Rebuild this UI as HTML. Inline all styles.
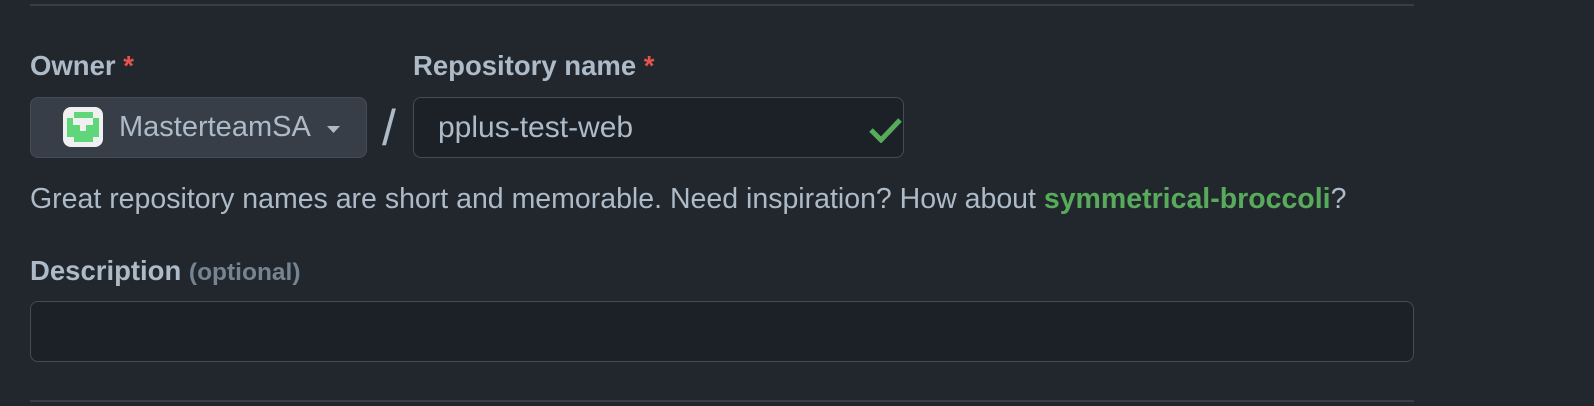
<!DOCTYPE html>
<html><head><meta charset="utf-8"><style>
body{margin:0;width:1594px;height:406px;background:#22272e;position:relative;overflow:hidden;font-family:"Liberation Sans",Arial,sans-serif;color:#adbac7}
.a{position:absolute;white-space:nowrap}
.line{position:absolute;left:30px;width:1384px;height:2px;background:#373e47}
.lbl{font-weight:bold;font-size:27.5px}
.star{color:#e5534b}
</style></head><body>
<div class="line" style="top:4px"></div>
<div class="a lbl" style="left:30px;top:50px">Owner <span class="star">*</span></div>
<div class="a lbl" style="left:413px;top:50px">Repository name <span class="star">*</span></div>
<div class="a" style="left:30px;top:97px;width:335px;height:59px;background:#373e47;border:1px solid #444c56;border-radius:8px"></div>
<svg class="a" style="left:63px;top:107px" width="40" height="40" viewBox="0 0 40 40">
<rect width="40" height="40" rx="8" fill="#f0f0f0"/>
<g fill="#5fd67a">
<rect x="11" y="5" width="19" height="6"/>
<rect x="4" y="11" width="6" height="7"/><rect x="30" y="11" width="6" height="7"/>
<rect x="4" y="18" width="13" height="6"/><rect x="23" y="18" width="13" height="6"/>
<rect x="4" y="24" width="32" height="6"/>
<rect x="11" y="30" width="19" height="5"/>
</g></svg>
<div class="a" style="left:119px;top:111px;font-size:29px;color:#adbac7">MasterteamSA</div>
<svg class="a" style="left:327px;top:126px" width="13" height="7"><path d="M0 0h13l-6.5 7z" fill="#adbac7"/></svg>
<div class="a" style="left:382px;top:99px;font-size:50px;color:#adbac7">/</div>
<div class="a" style="left:413px;top:97px;width:489px;height:59px;background:#1c2128;border:1px solid #444c56;border-radius:8px"></div>
<div class="a" style="left:438px;top:111px;font-size:30px;color:#adbac7">pplus-test-web</div>
<svg class="a" style="left:869px;top:117px" width="33" height="26" viewBox="0 0 33 26"><path d="M2 13l10 10L31 3" fill="none" stroke="#57ab5a" stroke-width="5"/></svg>
<div class="a" style="left:30px;top:183px;font-size:28.5px">Great repository names are short and memorable. Need inspiration? How about <b style="color:#57ab5a">symmetrical-broccoli</b>?</div>
<div class="a lbl" style="left:30px;top:255px">Description <span style="color:#768390;font-size:24.5px">(optional)</span></div>
<div class="a" style="left:30px;top:301px;width:1382px;height:59px;background:#1c2128;border:1px solid #444c56;border-radius:8px"></div>
<div class="line" style="top:400px"></div>
</body></html>
